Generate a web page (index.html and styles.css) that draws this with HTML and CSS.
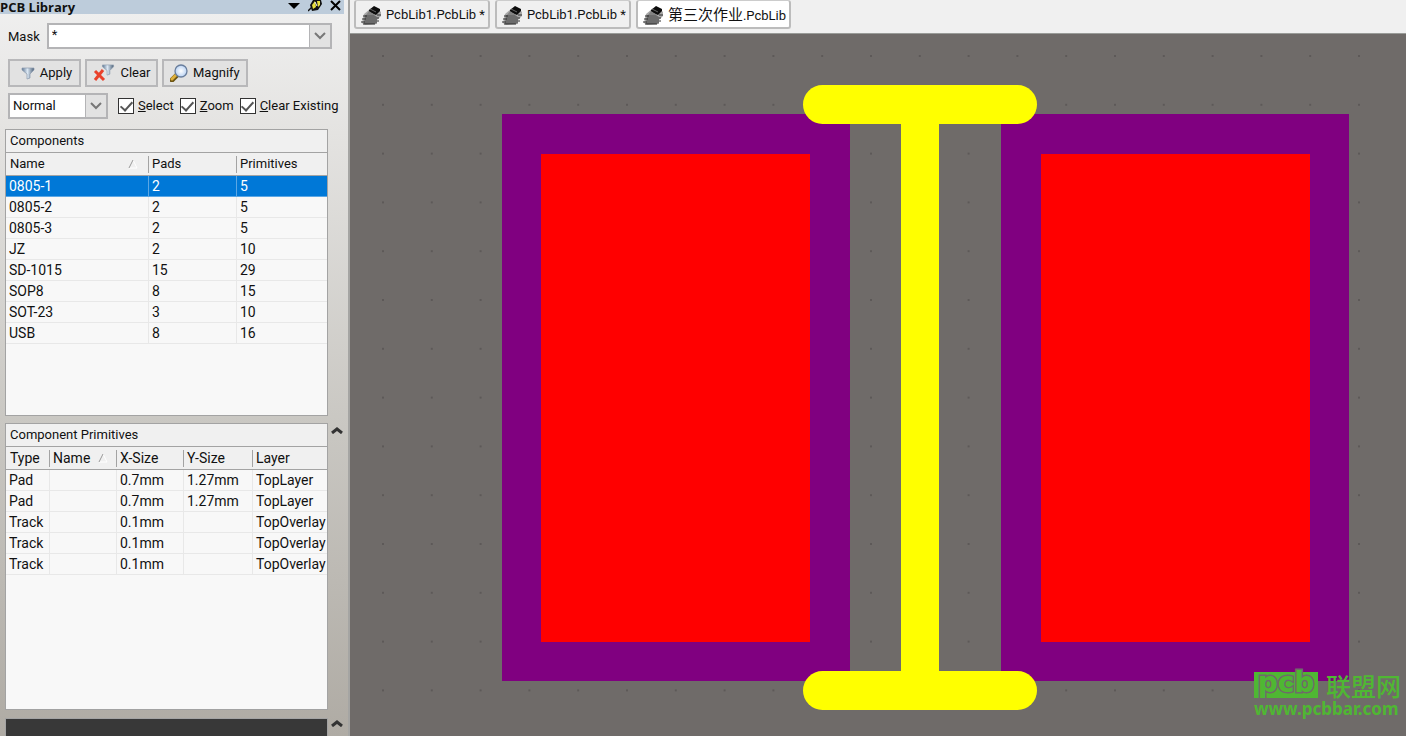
FILE: index.html
```html
<!DOCTYPE html>
<html lang="en">
<head>
<meta charset="utf-8">
<title>PCB Library</title>
<link rel="stylesheet" href="styles.css">
</head>
<body>
<svg class="defs" aria-hidden="true">
  <defs>
    <linearGradient id="steel" x1="0" x2="1"><stop offset="0" stop-color="#5e7692"/><stop offset=".45" stop-color="#dce8f4"/><stop offset="1" stop-color="#4d6178"/></linearGradient>
    <radialGradient id="glass"><stop offset="0" stop-color="#ffffff"/><stop offset="1" stop-color="#b9d2f3"/></radialGradient>
    <symbol id="funnel" viewBox="0 0 14 13"><path d="M1 1h12v2L9 7v4l-3 1V7L1 3z" fill="url(#steel)" stroke="#8b9aac" stroke-width=".7"/></symbol>
    <symbol id="chip" viewBox="0 0 20 19">
      <path d="M3 8l6-5 8 0 3 3v4l-4 4v4l-12 1-3-2z" fill="#a9a9a9"/>
      <path d="M4 9h9l3 2v6l-3 1H3z" fill="#6c6c6c"/>
      <path d="M8 4l5-4 6 3v2l-4 4-7-3z" fill="#0c0c0c"/>
      <path d="M9 3l6 3" stroke="#666" fill="none"/>
      <path d="M5 9l3-4 6 4z" fill="#838383"/>
      <path d="M2 10h4M1 13h4M0 16h4M2 18h12M16 12h2M16 9h4M16 15h2" stroke="#2e2e2e" fill="none"/>
    </symbol>
    <symbol id="down" viewBox="0 0 12 8"><path d="M1 1l5 5 5-5" fill="none" stroke="#777" stroke-width="2"/></symbol>
    <symbol id="collapse" viewBox="0 0 12 8"><path d="M1 7l5-4 5 4" fill="none" stroke="#333" stroke-width="3"/></symbol>
    <symbol id="sort" viewBox="0 0 10 10"><path d="M5 1l4 8H1" fill="none" stroke="#fff"/><path d="M1 9l4-8" stroke="#999"/></symbol>
  </defs>
</svg>
<div class="app">
  <aside class="panel">
    <header class="titlebar">
      <h1>PCB Library</h1>
      <button class="tool" aria-label="Panel menu"><svg width="12" height="14" viewBox="0 0 12 14"><path d="M0 3h12L6 9z" fill="#000"/></svg></button>
      <button class="tool" aria-label="Pin"><svg width="14" height="14" viewBox="0 0 14 14"><path d="M0 11l4-4" stroke="#111" stroke-width="1.5"/><path d="M2 5l3-5h8l1 4-4 6-6 1z" fill="#111"/><path d="M4 5l3-4 1 6-3 2zM9 1h3v4l-2 2z" fill="#e8df3e"/><path d="M7 2l2 4" stroke="#fff"/></svg></button>
      <button class="tool" aria-label="Close"><svg width="12" height="14" viewBox="0 0 12 14"><path d="M1 1l9 9M10 1l-9 9" stroke="#000" stroke-width="2"/></svg></button>
    </header>
    <div class="mask">
      <label for="mask">Mask</label>
      <div class="combo"><input id="mask" type="text" value="*"><button aria-label="Show masks"><svg width="12" height="8"><use href="#down"/></svg></button></div>
    </div>
    <div class="actions">
      <button class="btn"><svg width="14" height="13"><use href="#funnel"/></svg>Apply</button>
      <button class="btn"><svg width="23" height="18" viewBox="0 0 23 18"><path d="M2 7l9 9M10 6l-8 10" stroke="#e9412b" stroke-width="3"/><use href="#funnel" x="8" y="0" width="14" height="12"/></svg>Clear</button>
      <button class="btn"><svg width="18" height="18" viewBox="0 0 18 18"><path d="M2 16l5-5" stroke="#6b5412" stroke-width="5" stroke-linecap="round"/><path d="M2 15l4-4" stroke="#e0b13b" stroke-width="3" stroke-linecap="round"/><circle cx="11" cy="7" r="6" fill="url(#glass)" stroke="#697e9d" stroke-width="1.3"/></svg>Magnify</button>
    </div>
    <div class="options">
      <div class="pick"><select aria-label="Display mode"><option>Normal</option></select><span class="arrow"><svg width="12" height="8"><use href="#down"/></svg></span></div>
      <label class="check"><input type="checkbox" checked><span><u>S</u>elect</span></label>
      <label class="check"><input type="checkbox" checked><span><u>Z</u>oom</span></label>
      <label class="check"><input type="checkbox" checked><span><u>C</u>lear Existing</span></label>
    </div>
    <div class="section">
      <div class="list">
        <table class="components">
          <caption>Components</caption>
          <colgroup><col class="c-name"><col class="c-pads"><col></colgroup>
          <thead><tr><th>Name<svg class="sort" width="10" height="10"><use href="#sort"/></svg></th><th>Pads</th><th>Primitives</th></tr></thead>
          <tbody>
            <tr class="selected"><td>0805-1</td><td>2</td><td>5</td></tr>
            <tr><td>0805-2</td><td>2</td><td>5</td></tr>
            <tr><td>0805-3</td><td>2</td><td>5</td></tr>
            <tr><td>JZ</td><td>2</td><td>10</td></tr>
            <tr><td>SD-1015</td><td>15</td><td>29</td></tr>
            <tr><td>SOP8</td><td>8</td><td>15</td></tr>
            <tr><td>SOT-23</td><td>3</td><td>10</td></tr>
            <tr><td>USB</td><td>8</td><td>16</td></tr>
          </tbody>
        </table>
      </div>
    </div>
    <div class="section">
      <div class="list">
        <table class="primitives">
          <caption>Component Primitives</caption>
          <colgroup><col class="p-type"><col class="p-size"><col class="p-size"><col class="p-y"><col></colgroup>
          <thead><tr><th>Type</th><th>Name<svg class="sort" width="10" height="10"><use href="#sort"/></svg></th><th>X-Size</th><th>Y-Size</th><th>Layer</th></tr></thead>
          <tbody>
            <tr><td>Pad</td><td></td><td>0.7mm</td><td>1.27mm</td><td>TopLayer</td></tr>
            <tr><td>Pad</td><td></td><td>0.7mm</td><td>1.27mm</td><td>TopLayer</td></tr>
            <tr><td>Track</td><td></td><td>0.1mm</td><td></td><td>TopOverlay</td></tr>
            <tr><td>Track</td><td></td><td>0.1mm</td><td></td><td>TopOverlay</td></tr>
            <tr><td>Track</td><td></td><td>0.1mm</td><td></td><td>TopOverlay</td></tr>
          </tbody>
        </table>
      </div>
      <button class="collapse" aria-label="Collapse primitives"><svg width="12" height="8"><use href="#collapse"/></svg></button>
    </div>
    <div class="section preview">
      <div class="list"></div>
      <button class="collapse" aria-label="Collapse preview"><svg width="12" height="8"><use href="#collapse"/></svg></button>
    </div>
  </aside>
  <main class="work">
    <nav class="tabs">
      <button class="tab"><svg width="20" height="19"><use href="#chip"/></svg>PcbLib1.PcbLib *</button>
      <button class="tab"><svg width="20" height="19"><use href="#chip"/></svg>PcbLib1.PcbLib *</button>
      <button class="tab active"><svg width="20" height="19"><use href="#chip"/></svg><span><span class="cjk">第三次作业</span>.PcbLib</span></button>
    </nav>
    <div class="canvas">
      <svg class="board" viewBox="0 0 1056 702" preserveAspectRatio="xMinYMin slice" role="img" aria-label="Footprint 0805-1">
        <defs><pattern id="grid" x="32" y="21" width="48.8" height="48.8" patternUnits="userSpaceOnUse"><rect width="2" height="2" fill="#5d5958"/></pattern></defs>
        <rect width="1056" height="702" fill="url(#grid)"/>
        <g fill="#800080"><rect x="152" y="80" width="348" height="567"/><rect x="651" y="80" width="348" height="567"/></g>
        <g fill="#f00"><rect x="191" y="120" width="269" height="488"/><rect x="691" y="120" width="269" height="488"/></g>
        <g fill="#ff0"><rect x="453" y="51" width="234" height="39" rx="19.5"/><rect x="453" y="637" width="234" height="39" rx="19.5"/><rect x="551" y="60" width="38" height="600"/></g>
      </svg>
      <div class="watermark">
        <div class="brand"><svg class="logo" width="64" height="27" viewBox="0 0 64 27"><rect width="64" height="26" fill="#4fb733"/><text x="32" y="20" text-anchor="middle">pcb</text></svg><span class="cn">联盟网</span></div>
        <div class="site">www.pcbbar.com</div>
      </div>
    </div>
  </main>
</div>
</body>
</html>
```
FILE: styles.css
```css
* { box-sizing: border-box; }
body { margin: 0; font: 14px/20px Roboto, "Liberation Sans", sans-serif; color: #111; }
button, input, select { font: inherit; color: inherit; margin: 0; padding: 0; border: 0; background: none; border-radius: 0; }
button { display: flex; align-items: center; justify-content: center; }
svg { flex: none; }
.defs { position: absolute; width: 0; height: 0; }
.app { display: flex; height: 100vh; overflow: hidden; background: #f0f0f0; }

.panel { flex: none; width: 350px; display: flex; flex-direction: column; overflow: hidden; border-right: 2px solid #a5a5a3; background: linear-gradient(#f0f0f0, #e4e3e1 18%, #c9c7c2 58%, #afaba4); }
.titlebar { display: flex; align-items: flex-start; gap: 8px; height: 14px; margin-right: 4px; padding-right: 2px; background: #bdccdb; }
.titlebar h1 { flex: 1; margin: 0; font: bold 13px/14px "Open Sans", sans-serif; }
.mask { display: flex; align-items: center; gap: 7px; margin-top: 9px; padding: 0 16px 0 8px; font-size: 13px; }
.mask label { padding-top: 2px; }
.combo { flex: 1; display: flex; height: 26px; border: 2px solid #b4b4b6; background: #fff; }
.combo input { flex: 1; min-width: 0; padding: 0 3px 3px; outline: 0; }
.combo button, .arrow { width: 21px; border-left: 1px solid #b4b4b6; background: #e2e2e2; }
.actions { display: flex; gap: 4px; margin-top: 10px; padding-left: 8px; }
.btn { height: 28px; gap: 5px; padding: 0 6px; border: 2px solid #b8b8ba; background: #e2e2e2; font-size: 13px; }
.btn:nth-child(-n+2) { width: 73px; }
.btn:first-child { padding-left: 10px; }
.options { display: flex; align-items: center; gap: 6px; margin-top: 6px; padding-left: 8px; }
.pick { display: grid; width: 100px; height: 26px; margin-right: 4px; border: 2px solid #b4b4b6; background: #fff; font-size: 13px; }
.pick select { grid-area: 1 / 1; appearance: none; padding-left: 3px; outline: 0; }
.arrow { grid-area: 1 / 1; justify-self: end; display: flex; align-items: center; justify-content: center; pointer-events: none; }
.check { display: flex; align-items: center; gap: 4px; white-space: nowrap; font-size: 13px; }
.check input { appearance: none; width: 16px; height: 16px; border: 1px solid #333; background: #fff; display: grid; place-items: center; }
.check input:checked::before { content: ""; width: 5px; height: 10px; margin-top: -3px; border: solid #555; border-width: 0 2px 2px 0; transform: rotate(42deg); }

.section { flex: 1 1 0; min-height: 0; display: flex; gap: 3px; margin-top: 7px; padding-left: 5px; }
.options + .section { margin-top: 10px; }
.list { width: 323px; border: 1px solid #a3a3a3; background: #f8f8f8; overflow: hidden; }
.collapse { height: 14px; align-items: center; }
.preview { flex: 0 0 18px; margin-top: 8px; }
.preview .list { border-bottom: 0; background: #383838; }
.preview .collapse { height: 10px; }
table { width: 100%; table-layout: fixed; border-collapse: separate; border-spacing: 0; }
caption { height: 22px; padding-left: 4px; font-size: 13px; line-height: 22px; text-align: left; background: #f0f0f0; }
th { height: 24px; padding: 0 4px; font-weight: normal; text-align: left; line-height: 22px; border-top: 1px solid #a3a3a3; border-bottom: 1px solid #a3a3a3; background: linear-gradient(#a3a3a3, #a3a3a3) 0 3px / 1px 17px no-repeat #f0f0f0; }
th:first-child { background: #f0f0f0; }
td { height: 21px; padding: 0 3px; line-height: 20px; white-space: nowrap; border-bottom: 1px solid #e8e8e8; border-left: 1px solid #e8e8e8; }
td:first-child { border-left: 0; }
.components th { font-size: 13px; }
.selected td { color: #fff; background: #0078d7; border-color: #5ba7e5; }
.sort { float: right; margin: 6px 6px 0 0; }
.primitives .sort { margin-right: 4px; }
.c-name { width: 142px; }
.c-pads { width: 88px; }
.p-type { width: 43px; }
.p-size { width: 67px; }
.p-y { width: 69px; }

.work { flex: 1; min-width: 0; display: flex; flex-direction: column; }
.tabs { display: flex; gap: 5px; height: 34px; padding: 0 0 5px 4px; border-bottom: 1px solid #999b98; }
.tab { height: 29px; gap: 5px; padding: 2px 3px 0 5px; border: 2px solid #bcbcbc; border-top: 1px solid #ccc; border-radius: 3px; font-size: 13px; background: #f0f0f0; white-space: nowrap; }
.tab.active { background: #fff; }
.cjk { font: 15px/20px "Noto Sans CJK SC", sans-serif; }
.canvas { flex: 1; min-height: 0; display: grid; background: #6f6b69; overflow: hidden; }
.board { grid-area: 1 / 1; display: block; width: 100%; height: 100%; min-height: 0; }
.watermark { grid-area: 1 / 1; align-self: end; justify-self: end; padding: 0 5px 17px 0; color: #4fb733; }
.brand { display: flex; align-items: center; gap: 8px; height: 28px; }
.logo { overflow: visible; }
.logo text { font: bold 28px "DejaVu Sans", sans-serif; fill: #4fb733; stroke: #6f6b69; stroke-width: 3px; paint-order: stroke; }
.cn { font: 500 25px/26px "Noto Sans CJK SC", sans-serif; }
.site { font: bold 17px/20px "Noto Sans", sans-serif; }
```
